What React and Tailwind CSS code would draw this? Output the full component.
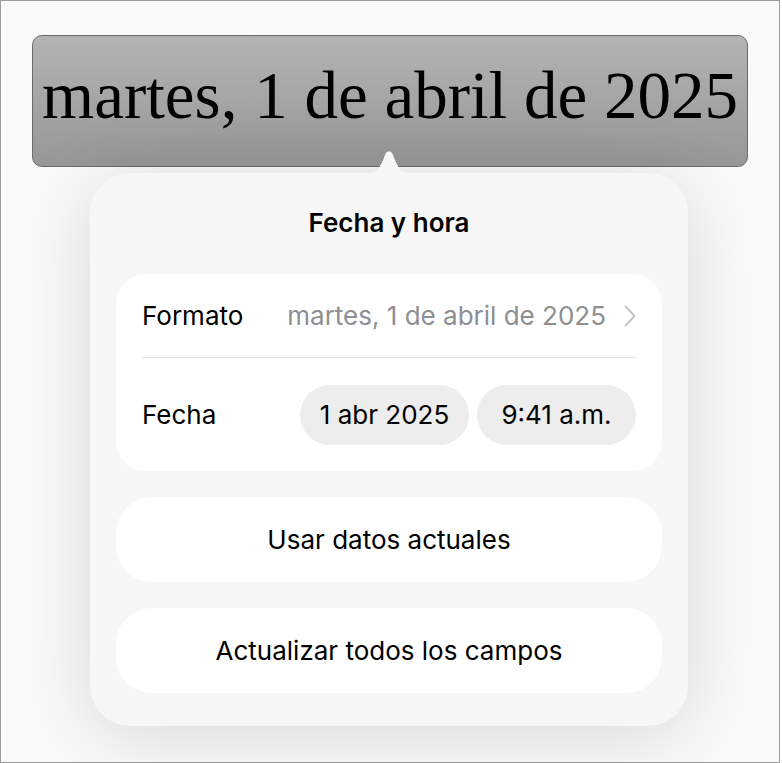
import React from "react";

export default function App() {
  const sans = { fontFamily: "Inter, 'Noto Sans', sans-serif" };
  return (
    <div className="w-[782px] h-[763px] bg-white">
      <div
        className="w-[780px] h-[763px] border border-[#9c9c9c] bg-[#fafafa] flex flex-col overflow-hidden"
        style={sans}
      >
        <div className="mt-[34px] ml-[31px] w-[716px] h-[132px] rounded-[10px] border border-[#6a6a6a] bg-gradient-to-b from-[#b3b3b3] to-[#979797] flex items-center justify-center">
          <span
            className="text-[67px] leading-none text-black whitespace-nowrap pb-[12px]"
            style={{ fontFamily: "'Liberation Serif', 'DejaVu Serif', serif" }}
          >
            martes, 1 de abril de 2025
          </span>
        </div>

        <div className="relative mt-[6px] ml-[89px] w-[598px] rounded-[40px] bg-[#f7f7f7] shadow-[0_10px_80px_rgba(0,0,0,0.14)] flex flex-col px-[26px] pt-[36px] pb-[33px]">
          <svg
            className="absolute left-[277px] top-[-23px]"
            width="44"
            height="24"
            viewBox="0 0 44 24"
          >
            <path
              d="M0 24 C10 24 14 16 18 5 C20 0 24 0 26 5 C30 16 34 24 44 24 Z"
              fill="#f7f7f7"
            />
          </svg>

          <div className="text-center text-[26px] leading-[28px] font-semibold text-black">
            Fecha y hora
          </div>

          <div className="mt-[37px] bg-white rounded-[30px] px-[26px] flex flex-col">
            <div className="h-[83px] flex items-center justify-between">
              <span className="text-[26px] text-black">Formato</span>
              <span className="flex items-center gap-[18px] text-[26px] text-[#8e8e93]">
                martes, 1 de abril de 2025
                <svg width="12" height="22" viewBox="0 0 12 22" className="mt-[1px]">
                  <path
                    d="M1.5 1.5 L10.5 11 L1.5 20.5"
                    fill="none"
                    stroke="#c4c4c7"
                    strokeWidth="2"
                    strokeLinecap="round"
                    strokeLinejoin="round"
                  />
                </svg>
              </span>
            </div>
            <div className="h-px bg-[#e3e3e3]" />
            <div className="h-[113px] flex items-center justify-between">
              <span className="text-[26px] text-black">Fecha</span>
              <div className="flex gap-[8px]">
                <span className="h-[60px] w-[169px] rounded-full bg-[#ededed] flex items-center justify-center text-[26px] text-black">
                  1 abr 2025
                </span>
                <span className="h-[60px] w-[159px] rounded-full bg-[#ededed] flex items-center justify-center text-[26px] text-black">
                  9:41 a.m.
                </span>
              </div>
            </div>
          </div>

          <div className="mt-[26px] h-[85px] bg-white rounded-[36px] flex items-center justify-center text-[26px] text-black">
            Usar datos actuales
          </div>
          <div className="mt-[26px] h-[85px] bg-white rounded-[36px] flex items-center justify-center text-[26px] text-black">
            Actualizar todos los campos
          </div>
        </div>
      </div>
    </div>
  );
}
